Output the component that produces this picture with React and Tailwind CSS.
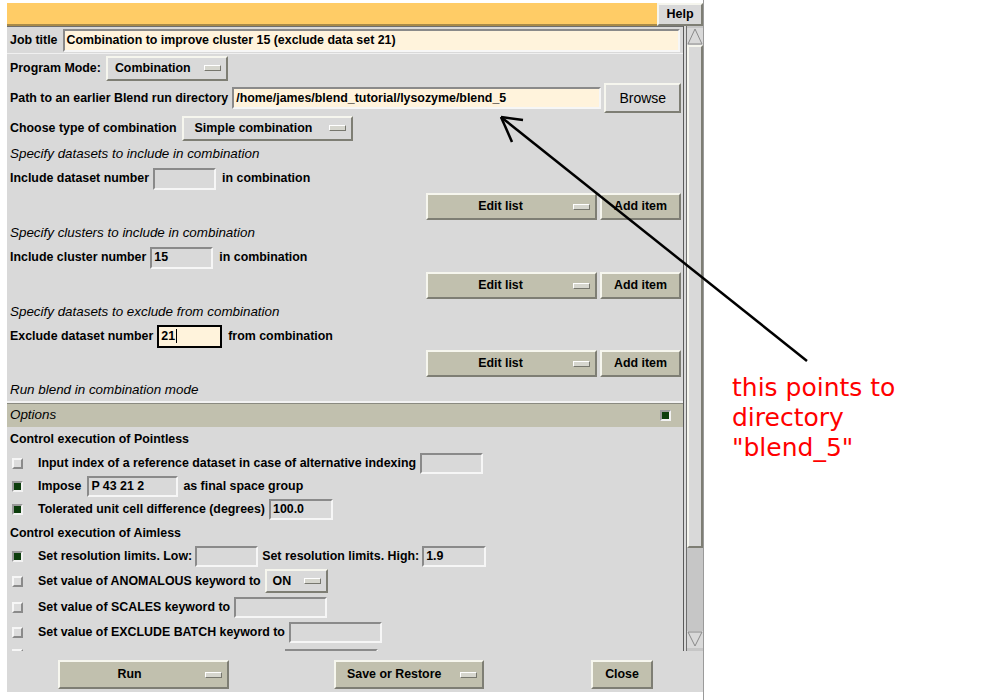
import React from "react";

const raised = "border-2 border-t-[#f6f6ee] border-l-[#f6f6ee] border-b-[#7e7e74] border-r-[#7e7e74]";
const sunken = "border-2 border-t-[#8a8a8a] border-l-[#8a8a8a] border-b-[#f6f6f6] border-r-[#f6f6f6]";

function Ind() {
  return <span className="block w-[17px] h-[6px] bg-[#d6d6ce] border border-t-white border-l-white border-b-[#77776e] border-r-[#77776e]" />;
}

function Entry({ w, value = "", cream = false, focus = false, h = "h-[22px]" }) {
  const border = focus ? "border-2 border-black" : sunken;
  const bg = cream || focus ? "bg-[#fff3dc]" : "bg-[#d9d9d9]";
  return (
    <div className={`${w} ${h} ${border} ${bg} flex items-center pl-[2px] font-bold text-[12.4px] shrink-0 whitespace-nowrap overflow-hidden`}>
      {value}
      {focus && <span className="inline-block w-[1px] h-[14px] bg-black ml-[1px]" />}
    </div>
  );
}

function Check({ on }) {
  return on ? (
    <span className="block w-[11px] h-[11px] bg-[#0d3e0d] border-2 border-t-[#9a9a9a] border-l-[#9a9a9a] border-b-[#f2f2f2] border-r-[#f2f2f2] shrink-0" />
  ) : (
    <span className="block w-[11px] h-[11px] bg-[#dcdcdc] border-2 border-t-[#f6f6f6] border-l-[#f6f6f6] border-b-[#8a8a8a] border-r-[#8a8a8a] shrink-0" />
  );
}

function EditRow({ h, pt }) {
  return (
    <div className={`${h} ${pt} flex justify-end gap-[3px] pr-[2px]`}>
      <div className={`w-[171px] h-[27px] ${raised} bg-[#c1c0ae] flex items-center font-bold`}>
        <span className="flex-1 text-center">Edit list</span>
        <span className="mr-[5px]"><Ind /></span>
      </div>
      <div className={`w-[81px] h-[27px] ${raised} bg-[#c1c0ae] flex items-center justify-center font-bold`}>Add item</div>
    </div>
  );
}

function CRow({ h, on, children }) {
  return (
    <div className={`${h} flex items-center pl-[5px] font-bold`}>
      <Check on={on} />
      <div className="ml-[15px] flex items-center whitespace-nowrap">{children}</div>
    </div>
  );
}

function Tri({ down }) {
  return (
    <svg width="16" height="17" viewBox="0 0 16 17" className="block">
      {down ? (
        <polygon points="1,1 15,1 8,15" fill="#d9d9d9" stroke="#8a8a8a" strokeWidth="1" />
      ) : (
        <polygon points="8,1 15,16 1,16" fill="#d9d9d9" stroke="#8a8a8a" strokeWidth="1" />
      )}
    </svg>
  );
}

export default function App() {
  return (
    <div className="relative w-[1000px] h-[700px] bg-white flex font-['Liberation_Sans',Arial,sans-serif] text-[12.4px] text-black overflow-hidden">
      <div className="pl-[7px] pt-[3px]">
        <div className="w-[696px] h-[689px] bg-[#d9d9d9] flex flex-col">
          {/* top bar */}
          <div className="h-[23px] flex shrink-0">
            <div className="flex-1 bg-[#ffcc66] border-b-2 border-[#a88a48]" />
            <div className={`w-[46px] ${raised} bg-[#d9d9d9] flex items-center justify-center font-bold text-[12.5px]`}>Help</div>
          </div>
          {/* main */}
          <div className="h-[625px] flex shrink-0">
            <div className="w-[676px] overflow-hidden border-t border-[#6e6e6e]">
              <div className="h-[27px] flex items-center pl-[3px] pr-[3px] gap-[5px] border-b border-[#f0f0f0]">
                <span className="font-bold whitespace-nowrap">Job title</span>
                <div className="flex-1"><Entry w="w-full" h="h-[23px]" cream value="Combination to improve cluster 15 (exclude data set 21)" /></div>
              </div>
              <div className="h-[28px] flex items-center pl-[3px] gap-[5px] font-bold">
                <span>Program Mode:</span>
                <div className={`w-[122px] h-[25px] ${raised} bg-[#d9d9d9] flex items-center justify-between pl-[7px] pr-[5px]`}>
                  <span>Combination</span><Ind />
                </div>
              </div>
              <div className="h-[32px] flex items-center pl-[3px] font-bold">
                <span className="whitespace-nowrap">Path to an earlier Blend run directory</span>
                <div className="ml-[4px]"><Entry w="w-[369px]" h="h-[22px]" cream value="/home/james/blend_tutorial/lysozyme/blend_5" /></div>
                <div className={`ml-[3px] w-[77px] h-[30px] ${raised} bg-[#d9d9d9] flex items-center justify-center font-normal text-[14px]`}>Browse</div>
              </div>
              <div className="h-[28px] flex items-center pl-[3px] font-bold">
                <span className="whitespace-nowrap">Choose type of combination</span>
                <div className={`ml-[5px] w-[171px] h-[25px] ${raised} bg-[#d9d9d9] flex items-center justify-between pl-[11px] pr-[5px]`}>
                  <span>Simple combination</span><Ind />
                </div>
              </div>
              <div className="h-[24px] flex items-center pl-[3px] italic text-[13.4px]">Specify datasets to include in combination</div>
              <div className="h-[25px] flex items-center pl-[3px] font-bold gap-[4px]">
                <span>Include dataset number</span><Entry w="w-[63px]" /><span className="ml-[2px]">in combination</span>
              </div>
              <EditRow h="h-[31px]" pt="pt-[2px]" />
              <div className="h-[23px] flex items-center pl-[3px] italic text-[13.4px]">Specify clusters to include in combination</div>
              <div className="h-[25px] flex items-center pl-[3px] font-bold gap-[4px]">
                <span>Include cluster number</span><Entry w="w-[63px]" value="15" /><span className="ml-[2px]">in combination</span>
              </div>
              <EditRow h="h-[30px]" pt="pt-[2px]" />
              <div className="h-[24px] flex items-center pl-[3px] italic text-[13.4px]">Specify datasets to exclude from combination</div>
              <div className="h-[24px] flex items-center pl-[3px] font-bold gap-[4px]">
                <span>Exclude dataset number</span><Entry w="w-[65px]" h="h-[23px]" focus value="21" /><span className="ml-[2px]">from combination</span>
              </div>
              <EditRow h="h-[31px]" pt="pt-[2px]" />
              <div className="h-[22px] flex items-center pl-[3px] italic text-[13.4px]">Run blend in combination mode</div>
              <div className="h-[27px] border-t-2 border-[#f2f2f2]">
                <div className="h-[24px] bg-[#c1c0ae] flex items-center justify-between pl-[3px] pr-[12px] border-t border-[#8a8a80]">
                  <span className="italic text-[13.4px]">Options</span>
                  <Check on />
                </div>
              </div>
              <div className="h-[23px] flex items-center pl-[3px] font-bold">Control execution of Pointless</div>
              <CRow h="h-[24px]">
                <span>Input index of a reference dataset in case of alternative indexing</span>
                <span className="ml-[4px]"><Entry w="w-[63px]" h="h-[21px]" /></span>
              </CRow>
              <CRow h="h-[23px]" on>
                <span>Impose</span>
                <span className="ml-[6px]"><Entry w="w-[91px]" h="h-[21px]" value="P 43 21 2" /></span>
                <span className="ml-[5px]">as final space group</span>
              </CRow>
              <CRow h="h-[23px]" on>
                <span>Tolerated unit cell difference (degrees)</span>
                <span className="ml-[4px]"><Entry w="w-[64px]" h="h-[21px]" value="100.0" /></span>
              </CRow>
              <div className="h-[24px] flex items-center pl-[3px] font-bold">Control execution of Aimless</div>
              <CRow h="h-[23px]" on>
                <span>Set resolution limits. Low:</span>
                <span className="ml-[3px]"><Entry w="w-[63px]" h="h-[21px]" /></span>
                <span className="ml-[4px]">Set resolution limits. High:</span>
                <span className="ml-[3px]"><Entry w="w-[64px]" h="h-[21px]" value="1.9" /></span>
              </CRow>
              <CRow h="h-[26px]">
                <span>Set value of ANOMALOUS keyword to</span>
                <div className={`ml-[4px] w-[63px] h-[24px] ${raised} bg-[#d9d9d9] flex items-center justify-between pl-[6px] pr-[5px]`}>
                  <span>ON</span><Ind />
                </div>
              </CRow>
              <CRow h="h-[26px]">
                <span>Set value of SCALES keyword to</span>
                <span className="ml-[4px]"><Entry w="w-[93px]" h="h-[21px]" /></span>
              </CRow>
              <CRow h="h-[25px]">
                <span>Set value of EXCLUDE BATCH keyword to</span>
                <span className="ml-[4px]"><Entry w="w-[93px]" h="h-[21px]" /></span>
              </CRow>
              <div className="h-[25px] flex items-start pl-[5px] pt-[4px]">
                <Check />
                <div className="ml-[262px]"><Entry w="w-[93px]" h="h-[21px]" /></div>
              </div>
            </div>
            {/* scrollbar */}
            <div className="w-[20px] flex border-l border-[#5a5a5a] pl-[2px]">
              <div className="flex-1 flex flex-col border-l border-[#6e6e6e] pt-[2px] pb-[3px] bg-[#c6c6c6]">
                <div className="bg-[#d9d9d9]"><Tri /></div>
                <div className={`h-[503px] bg-[#d9d9d9] ${raised}`} />
                <div className="flex-1" />
                <div className="bg-[#d9d9d9]"><Tri down /></div>
              </div>
            </div>
          </div>
          {/* bottom bar */}
          <div className="h-[41px] flex items-start pt-[9px] font-bold shrink-0">
            <div className={`ml-[51px] w-[171px] h-[29px] ${raised} bg-[#c1c0ae] flex items-center`}>
              <span className="flex-1 text-center pr-[6px]">Run</span>
              <span className="mr-[5px]"><Ind /></span>
            </div>
            <div className={`ml-[105px] w-[150px] h-[29px] ${raised} bg-[#c1c0ae] flex items-center justify-between pl-[11px] pr-[5px]`}>
              <span>Save or Restore</span><Ind />
            </div>
            <div className={`ml-[107px] w-[62px] h-[29px] ${raised} bg-[#c1c0ae] flex items-center justify-center`}>Close</div>
          </div>
        </div>
      </div>
      <div className="w-[1px] h-[700px] bg-[#9a9a9a]" />
      <div className="pl-[28px] pt-[373px] font-['DejaVu_Sans',sans-serif] text-[25px] leading-[30px] text-[#ff0000]">
        <div>this points to</div>
        <div>directory</div>
        <div>"blend_5"</div>
      </div>
      <svg className="absolute left-0 top-0 pointer-events-none" width="1000" height="700" viewBox="0 0 1000 700">
        <line x1="501" y1="117" x2="807" y2="361" stroke="black" strokeWidth="2.5" />
        <line x1="501" y1="117" x2="523" y2="120" stroke="black" strokeWidth="2.5" />
        <line x1="501" y1="117" x2="512" y2="142" stroke="black" strokeWidth="2.5" />
      </svg>
    </div>
  );
}
